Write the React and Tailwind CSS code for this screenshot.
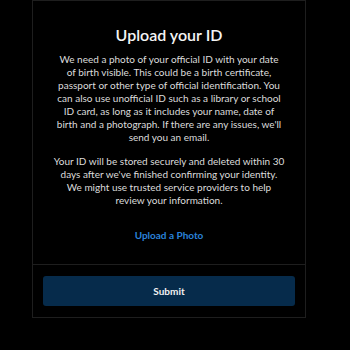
const p1 = [
  'We need a photo of your official ID with your date',
  'of birth visible. This could be a birth certificate,',
  'passport or other type of official identification. You',
  'can also use unofficial ID such as a library or school',
  'ID card, as long as it includes your name, date of',
  "birth and a photograph. If there are any issues, we'll",
  'send you an email.',
];

const p2 = [
  'Your ID will be stored securely and deleted within 30',
  "days after we've finished confirming your identity.",
  'We might use trusted service providers to help',
  'review your information.',
];

export default function App() {
  return (
    <div className="w-[350px] h-[350px] bg-black overflow-hidden" style={{ fontFamily: 'Lato, "Noto Sans", sans-serif' }}>
      <div className="ml-[32px] w-[274px] border border-[#1e1e1e] flex flex-col">
        {/* body */}
        <div className="px-[10px] pt-[24px] pb-[22px] flex flex-col items-center text-center">
          <h1 className="text-[16px] leading-[20px] font-semibold text-[#f4f4f4]">Upload your ID</h1>
          <p className="mt-[8px] text-[10px] leading-[13px] text-[#dcdcdc] whitespace-nowrap">
            {p1.map((l) => (
              <span key={l} className="block">{l}</span>
            ))}
          </p>
          <p className="mt-[11px] text-[10px] leading-[13px] text-[#dcdcdc] whitespace-nowrap">
            {p2.map((l) => (
              <span key={l} className="block">{l}</span>
            ))}
          </p>
          <button className="mt-[21px] text-[10px] leading-[14px] font-bold text-[#2a82d9]">Upload a Photo</button>
        </div>
        {/* footer */}
        <div className="border-t border-[#1e1e1e] px-[10px] pt-[11px] pb-[11px]">
          <button className="w-full h-[30px] rounded-[3px] bg-[#062b4b] text-[10px] font-bold text-[#f2f2f2]">Submit</button>
        </div>
      </div>
    </div>
  );
}
